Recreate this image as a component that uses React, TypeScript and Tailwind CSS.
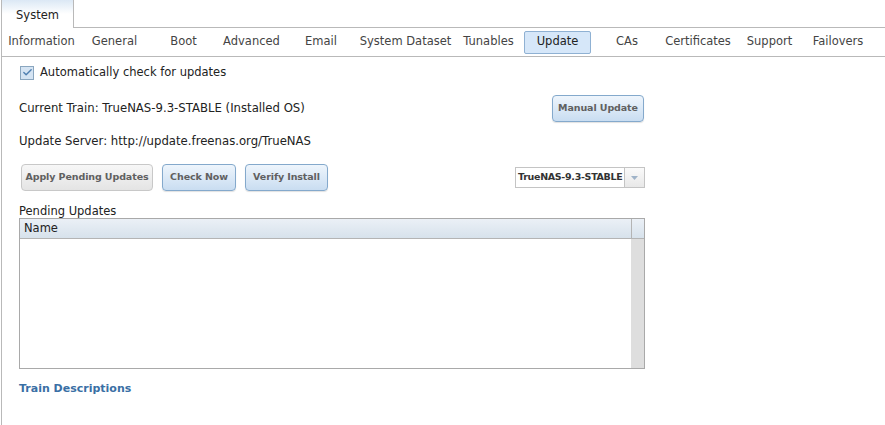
import { Check } from "lucide-react";

const tabs: [string, string][] = [
  ["Information", "w-[75px]"],
  ["General", "w-[71px]"],
  ["Boot", "w-[67px]"],
  ["Advanced", "w-[69px]"],
  ["Email", "w-[70px]"],
  ["System Dataset", "w-[99px]"],
  ["Tunables", "w-[67px]"],
  ["Update", "w-[71px]"],
  ["CAs", "w-[68px]"],
  ["Certificates", "w-[74px]"],
  ["Support", "w-[69px]"],
  ["Failovers", "w-[68px]"],
];

const grayBtn =
  "h-[27px] whitespace-nowrap rounded-[4px] border border-[#c8c8c8] bg-gradient-to-b from-[#f7f7f7] to-[#e4e4e4] text-[9.5px] font-bold tracking-[-0.1px] text-[#606060]";
const blueBtn =
  "h-[27px] whitespace-nowrap rounded-[4px] border border-[#84a9cc] bg-gradient-to-b from-[#eef5fc] to-[#c9ddf1] text-[9.5px] font-bold tracking-[-0.1px] text-[#606060] shadow-[0_1px_1px_rgba(0,0,0,0.12)]";

export default function App() {
  return (
    <div className="h-[425px] w-[885px] overflow-hidden bg-white font-['DejaVu_Sans',sans-serif] text-[11.5px] text-[#222]">
      <div className="ml-px flex h-full flex-col border-l border-[#b9b9b9]">
        {/* top tab */}
        <div className="flex h-[28px]">
          <div className="flex w-[72px] items-center justify-center border-r border-[#b9b9b9] bg-gradient-to-b from-[#dbe8f5] via-white to-white pt-[3px] text-[#222]">
            System
          </div>
          <div className="flex-1 border-b border-[#b9b9b9]" />
        </div>

        {/* sub tabs */}
        <div className="flex h-[29px] items-center border-b border-[#b9b9b9] pl-[2px] text-[#444]">
          {tabs.map(([name, w]) =>
            name === "Update" ? (
              <div key={name} className={`${w} flex justify-center`}>
                <div className="flex h-[23px] w-[67px] items-center justify-center rounded-[2px] border border-[#8fb1d3] bg-[#d6e7f9] text-[#222]">
                  {name}
                </div>
              </div>
            ) : (
              <div key={name} className={`${w} whitespace-nowrap text-center`}>
                {name}
              </div>
            )
          )}
        </div>

        {/* content */}
        <div className="w-[643px] pl-[17px]">
          <div className="mt-[8px] flex h-[15px] items-center gap-[6px] pl-[1px]">
            <div className="flex h-[14px] w-[14px] items-center justify-center border border-[#8aa6bf] bg-[#d5e4f3]">
              <Check size={11} strokeWidth={3} className="text-[#4f7fb0]" />
            </div>
            <span>Automatically check for updates</span>
          </div>

          <div className="mt-[15px] flex h-[27px] items-center justify-between">
            <span className="text-[11.7px]">Current Train: TrueNAS-9.3-STABLE (Installed OS)</span>
            <button className={`${blueBtn} mr-px w-[92px]`}>Manual Update</button>
          </div>

          <div className="mt-[13px] flex h-[14px] items-center text-[11.7px]">
            Update Server: http://update.freenas.org/TrueNAS
          </div>

          <div className="mt-[15px] flex h-[27px] items-center justify-between">
            <div className="flex gap-[9px] pl-[2px]">
              <button className={`${grayBtn} w-[132px]`}>Apply Pending Updates</button>
              <button className={`${blueBtn} w-[74px]`}>Check Now</button>
              <button className={`${blueBtn} w-[83px]`}>Verify Install</button>
            </div>
            <div className="flex h-[21px] w-[130px] border border-[#c4c4c4]">
              <div className="flex flex-1 items-center overflow-hidden whitespace-nowrap pl-[2px] text-[9.5px] font-bold tracking-[-0.3px] text-[#333]">
                TrueNAS-9.3-STABLE
              </div>
              <div className="flex w-[20px] items-center justify-center border-l border-[#c4c4c4] bg-gradient-to-b from-[#fafafa] to-[#e8e8e8]">
                <svg width="7" height="4" viewBox="0 0 7 4">
                  <path d="M0 0h7L3.5 4z" fill="#9fb3c8" />
                </svg>
              </div>
            </div>
          </div>

          <div className="mt-[15px] flex h-[12px] items-center">Pending Updates</div>
          <div className="flex h-[151px] flex-col border border-[#a9a9a9]">
            <div className="flex h-[20px] border-b border-[#b4b4b4] bg-gradient-to-b from-[#ebf0f6] to-[#d7e2ec]">
              <div className="flex flex-1 items-center pl-[4px] text-[#222]">Name</div>
              <div className="w-[13px] border-l border-[#b4b4b4]" />
            </div>
            <div className="flex flex-1">
              <div className="flex-1" />
              <div className="w-[13px] bg-[#dedede]" />
            </div>
          </div>

          <div className="mt-[12px] text-[11px] font-bold text-[#3a6fa5]">Train Descriptions</div>
        </div>
      </div>
    </div>
  );
}
